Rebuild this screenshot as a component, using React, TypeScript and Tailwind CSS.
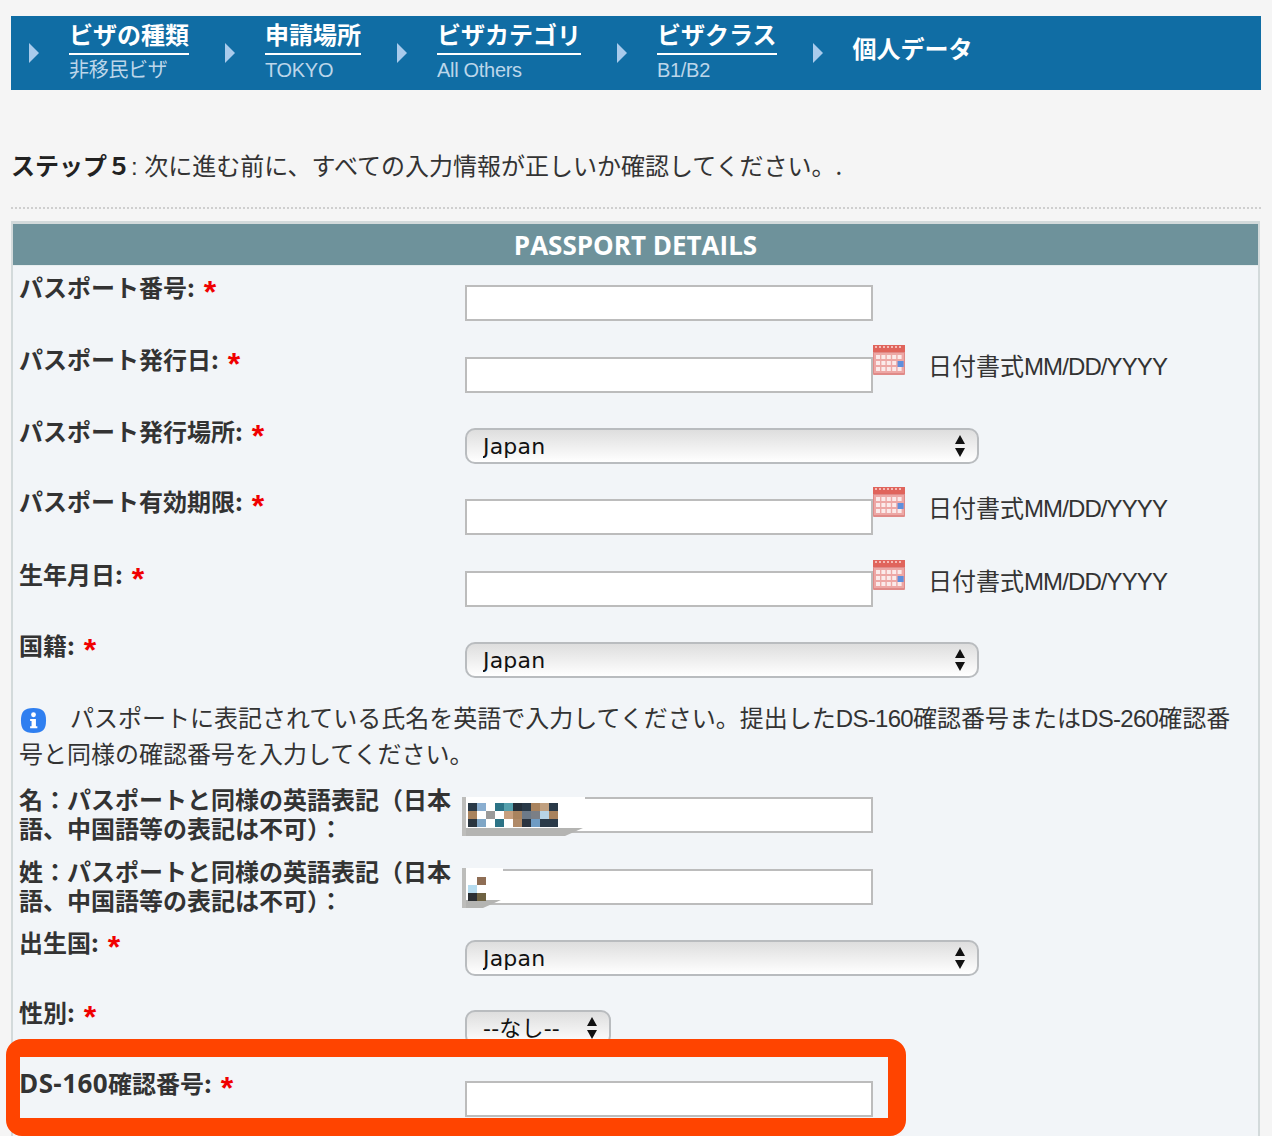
const jp = '"Noto Sans CJK JP", "Liberation Sans", sans-serif';

function Arrow() {
  return (
    <svg width="10" height="20" viewBox="0 0 10 20" className="shrink-0 mr-[30px] mt-[27px]">
      <path d="M0 0 L10 10 L0 20 Z" fill="#a9cbec" />
    </svg>
  );
}

function Crumb({ title, sub }: { title: string; sub: string }) {
  return (
    <div className="flex items-start mr-[36px]">
      <Arrow />
      <div className="flex flex-col">
        <div className="h-[39px] border-b-2 border-white text-[24px] leading-[36px] font-bold text-white whitespace-nowrap">{title}</div>
        <div className="h-[30px] text-[20px] leading-[30px] text-[#bcd6ea] tracking-[-0.3px] whitespace-nowrap" style={{ fontFamily: '"Liberation Sans", "Noto Sans CJK JP", sans-serif' }}>{sub}</div>
      </div>
    </div>
  );
}

function Req() {
  return <span className="text-[#f00000] font-bold ml-[9px] text-[32px] leading-[0] align-[-6px]" style={{ fontFamily: '"Liberation Sans", sans-serif' }}>*</span>;
}

function Label({ children, req = true }: { children: React.ReactNode; req?: boolean }) {
  return (
    <div className="w-[446px] shrink-0 h-[28px] text-[24px] leading-[28px] font-bold text-[#333]">
      {children}
      {req && <Req />}
    </div>
  );
}

function TextInput({ mt = "mt-[20px]" }: { mt?: string }) {
  return <input readOnly className={`${mt} block w-[408px] h-[36px] border-2 border-[#bcbcbc] bg-white`} />;
}

function Select({ value, w = "w-[514px]", mt }: { value: string; w?: string; mt: string }) {
  return (
    <div className={`${mt} ${w} relative h-[36px] shrink-0`}>
      <select
        defaultValue={value}
        className="appearance-none w-full h-full rounded-[10px] border-2 border-[#b9bcbf] bg-gradient-to-b from-[#dedede] to-[#ffffff] pl-[16px] text-[22px] text-[#111] tracking-[0.2px]"
        style={{ fontFamily: '"DejaVu Sans", "Noto Sans CJK JP", sans-serif' }}
      >
        <option>{value}</option>
      </select>
      <svg width="12" height="24" viewBox="0 0 12 24" className="absolute right-[13px] top-[6px]">
        <path d="M6 1 L11 10 L1 10 Z M6 23 L11 14 L1 14 Z" fill="#111" />
      </svg>
    </div>
  );
}

function Calendar() {
  const cells = [];
  for (let r = 0; r < 3; r++) {
    for (let c = 0; c < 5; c++) {
      const on = r === 1 && c === 4;
      cells.push(<rect key={`${r}-${c}`} x={3 + c * 5.4} y={10 + r * 6} width={on ? 6 : 4} height={on ? 6 : 4} fill={on ? "#5f8fdc" : "#fbeaea"} />);
    }
  }
  return (
    <svg width="32" height="30" viewBox="0 0 32 30" className="shrink-0">
      <rect x="0" y="0" width="32" height="30" rx="1" fill="#e08a88" />
      <rect x="0" y="0" width="32" height="7" fill="#e0645c" />
      <path d="M2 2H30" stroke="#fbd8d4" strokeWidth="1.5" strokeDasharray="2 2" />
      <rect x="1" y="8" width="30" height="20" fill="#eda7a5" />
      {cells}
    </svg>
  );
}

function DateInput({ mt }: { mt: string }) {
  return (
    <div className="flex items-start">
      <TextInput mt={mt} />
      <Calendar />
      <div className="ml-[23px] mt-[4px] text-[24px] leading-[32px] text-[#333] whitespace-nowrap">
        日付書式<span className="tracking-[-0.9px]" style={{ fontFamily: '"Liberation Sans", sans-serif' }}>MM/DD/YYYY</span>
      </div>
    </div>
  );
}

function Mosaic({ cells, w, h }: { cells: [number, number, string][]; w: number; h: number }) {
  return (
    <svg width={w} height={h} viewBox={`0 0 ${w} ${h}`} className="absolute left-0 top-0">
      <rect x="0" y="0" width={w} height={h - 8} fill="#ffffff" />
      <path d={`M0 ${h - 8}H${w - 2}L${w - 20} ${h}H0Z`} fill="#b4b4b2" />
      <rect x="0" y="0" width="4" height={h} fill="#bdbdbb" />
      {cells.map(([x, y, f], i) => (
        <rect key={i} x={x} y={y} width="9" height="8" fill={f} />
      ))}
    </svg>
  );
}

const first: [number, number, string][] = [
  [6, 6, "#2a3a48"], [15, 6, "#8aaed0"], [6, 14, "#a9835e"], [24, 14, "#9a9a9a"], [6, 22, "#2b3640"], [15, 22, "#7fa6c6"],
  [33, 6, "#2c7386"], [42, 6, "#55a0ad"], [51, 6, "#242f3a"], [60, 6, "#2a3a48"], [69, 6, "#a9835e"], [78, 6, "#c0a080"], [87, 6, "#2a3a48"],
  [42, 14, "#c69f7e"], [51, 14, "#a9835e"], [60, 14, "#6d7a88"], [69, 14, "#7b7f86"], [78, 14, "#b8d4e6"], [87, 14, "#a9835e"],
  [33, 22, "#2c7386"], [51, 22, "#b08a68"], [60, 22, "#2a3440"], [69, 22, "#6f9cc4"], [78, 22, "#2a3a48"], [87, 22, "#2a3a48"],
];
const last: [number, number, string][] = [
  [15, 9, "#8f6e55"], [6, 17, "#b6dcef"], [6, 25, "#2b2f33"], [15, 25, "#6e6242"],
];

function NameLabel({ a }: { a: string }) {
  return (
    <div className="w-[446px] shrink-0 pt-[1px] text-[24px] leading-[28.5px] font-bold text-[#333]">
      {a}：パスポートと同様の英語表記（日本語、中国語等の表記は不可）：
    </div>
  );
}

export default function App() {
  const lat = { fontFamily: '"Liberation Sans", sans-serif' };
  return (
    <div className="w-[1272px] h-[1136px] bg-[#f5f5f5] overflow-hidden relative pt-[16px] pl-[11px] text-[#333]" style={{ fontFamily: jp }}>
      <div className="w-[1250px] h-[74px] bg-[#106da4] flex items-start pl-[18px]">
        <Crumb title="ビザの種類" sub="非移民ビザ" />
        <Crumb title="申請場所" sub="TOKYO" />
        <Crumb title="ビザカテゴリ" sub="All Others" />
        <Crumb title="ビザクラス" sub="B1/B2" />
        <div className="flex items-start">
          <Arrow />
          <div className="mt-[14px] text-[24px] leading-[36px] font-bold text-white whitespace-nowrap">個人データ</div>
        </div>
      </div>

      <div className="mt-[57px] h-[36px] text-[24px] leading-[36px] whitespace-nowrap">
        <b className="text-[#222]">ステップ５</b>
        <span style={lat}>: </span>次に進む前に、すべての入力情報が正しいか確認してください。.
      </div>

      <div className="mt-[24px] w-[1250px] border-t-2 border-dotted border-[#cfcfcf]" />

      <div className="mt-[12px] w-[1249px] h-[940px] bg-[#f2f5f8] border-l-2 border-r-2 border-t-[3px] border-[#d3dadb]">
        <div className="h-[42px] bg-[#6e929b] text-center text-white font-bold text-[26px] leading-[42px] border-b border-[#e6edee]" style={{ fontFamily: '"Open Sans", sans-serif' }}>
          PASSPORT DETAILS
        </div>

        <div className="pl-[6px]">
          <div className="flex items-start h-[71px] pt-[7px]">
            <Label>パスポート番号:</Label>
            <TextInput mt="mt-[12px]" />
          </div>
          <div className="flex items-start h-[72px] pt-[8px]">
            <Label>パスポート発行日:</Label>
            <DateInput mt="mt-[12px]" />
          </div>
          <div className="flex items-start h-[71px] pt-[8px]">
            <Label>パスポート発行場所:</Label>
            <Select value="Japan" mt="mt-[11px]" />
          </div>
          <div className="flex items-start h-[72px] pt-[7px]">
            <Label>パスポート有効期限:</Label>
            <DateInput mt="mt-[12px]" />
          </div>
          <div className="flex items-start h-[71px] pt-[8px]">
            <Label>生年月日:</Label>
            <DateInput mt="mt-[11px]" />
          </div>
          <div className="flex items-start h-[71px] pt-[8px]">
            <Label>国籍:</Label>
            <Select value="Japan" mt="mt-[11px]" />
          </div>

          <div className="h-[90px] w-[1225px] pt-[6px] text-[24px] leading-[34px] text-[#333]">
            <svg width="27" height="27" viewBox="0 0 28 28" className="inline-block align-[-7px] mr-[23px] ml-[1px]">
              <path d="M14 1 C24 1 27 5 27 14 C27 23 24 27 14 27 C4 27 1 23 1 14 C1 5 4 1 14 1 Z" fill="#2f7ff0" />
              <rect x="11.5" y="5.5" width="5" height="5" rx="2.5" fill="#fff" />
              <path d="M10.5 12.5H16.5V20H18V22H10.5V20H12V14.5H10.5Z" fill="#fff" />
            </svg>
            パスポートに表記されている氏名を英語で入力してください。提出した<span className="tracking-[-0.7px]" style={lat}>DS-160</span>確認番号または<span className="tracking-[-0.7px]" style={lat}>DS-260</span>確認番号と同様の確認番号を入力してください。
          </div>

          <div className="flex items-start h-[72px]">
            <NameLabel a="名" />
            <div className="relative mt-[13px] h-[36px]">
              <TextInput mt="mt-0" />
              <div className="absolute -left-[3px] top-0 w-[123px] h-[39px]"><Mosaic cells={first} w={123} h={39} /></div>
            </div>
          </div>
          <div className="flex items-start h-[71px]">
            <NameLabel a="姓" />
            <div className="relative mt-[13px] h-[36px]">
              <TextInput mt="mt-0" />
              <div className="absolute -left-[3px] -top-[1px] w-[41px] h-[40px]"><Mosaic cells={last} w={41} h={40} /></div>
            </div>
          </div>
          <div className="flex items-start h-[70px] pt-[1px]">
            <Label>出生国:</Label>
            <Select value="Japan" mt="mt-[12px]" />
          </div>
          <div className="flex items-start h-[71px] pt-[1px]">
            <Label>性別:</Label>
            <Select value="--なし--" w="w-[146px]" mt="mt-[12px]" />
          </div>
          <div className="flex items-start h-[60px] pt-[1px]">
            <div className="w-[446px] shrink-0 h-[28px] text-[24px] leading-[28px] font-bold text-[#333]">
              <span className="text-[26px] tracking-[0.4px]" style={{ fontFamily: '"Open Sans", sans-serif' }}>DS-160</span>確認番号:<Req />
            </div>
            <TextInput mt="mt-[12px]" />
          </div>
        </div>
      </div>

      <div className="absolute left-[6px] top-[1039px] w-[900px] h-[97px] border-[#ff4400] border-t-[18px] border-b-[18px] border-r-[18px] border-l-[14px] rounded-[16px]" />
    </div>
  );
}
